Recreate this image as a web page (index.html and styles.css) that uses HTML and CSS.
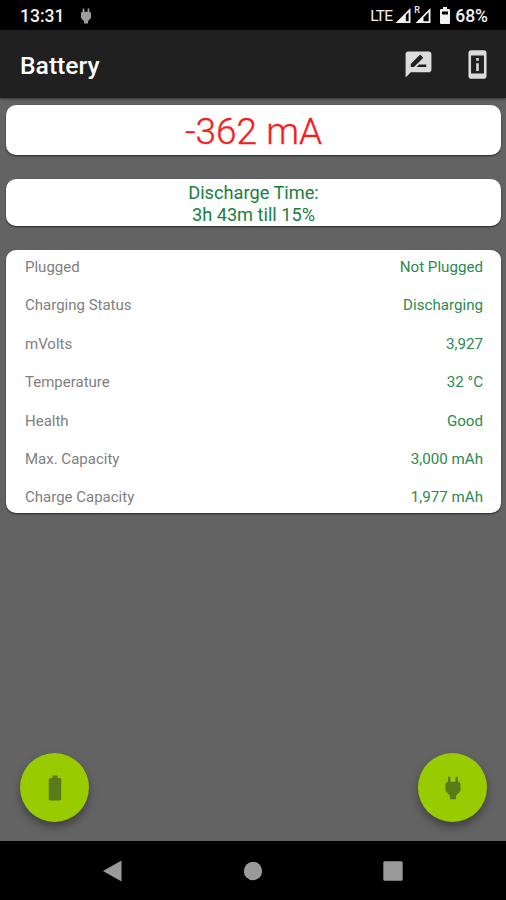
FILE: index.html
```html
<!DOCTYPE html>
<html lang="en">
<head>
  <meta charset="UTF-8">
  <meta name="viewport" content="width=device-width, initial-scale=1.0">
  <title>Battery</title>
  <link rel="stylesheet" href="styles.css">
</head>
<body>
  <div class="status-bar">
    <span class="clock">13:31</span>
    <svg class="status-plug" viewBox="0 0 24 24"><path d="M16.01 7L16 3h-2v4h-4V3H8v4h-.01C7 6.99 6 7.99 6 8.99v5.49L9.5 18v3h5v-3l3.5-3.51v-5.5c0-1-1-2-1.99-1.99z"/></svg>
    <div class="status-right">
      <span class="lte">LTE</span>
      <svg class="signal" viewBox="0 0 16 16"><path d="M0 16L16 0V16z"/><path class="hole" d="M11 7.5L14 4.500V14H11z"/></svg>
      <div class="roaming">
        <span class="roaming-r">R</span>
        <svg class="signal" viewBox="0 0 16 16"><path d="M0 16L16 0V16z"/><path class="hole" d="M8.500 10L14 4.500V14H8.500z"/></svg>
      </div>
      <svg class="status-battery" viewBox="0 0 10 17"><path d="M3 0h4v2h2q1 0 1 1v13q0 1-1 1H1q-1 0-1-1V3q0-1 1-1h2z"/><path class="hole" d="M2 4.500h6v3H2z"/></svg>
      <span class="percent">68%</span>
    </div>
  </div>

  <header class="app-bar">
    <h1>Battery</h1>
    <div class="actions">
      <svg class="icon" viewBox="0 0 24 24"><path d="M20 2H4c-1.1 0-1.99.9-1.99 2L2 22l4-4h14c1.1 0 2-.9 2-2V4c0-1.1-.9-2-2-2zM6 14v-2.470l6.880-6.880c.2-.2.51-.2.71 0l1.770 1.770c.2.2.2.51 0 .71L8.470 14H6zm12 0h-7.500l2-2H18v2z"/></svg>
      <svg class="icon" viewBox="0 0 24 24"><path d="M13 7h-2v2h2V7zm0 4h-2v6h2v-6zm4-9.990L7 1c-1.100 0-2 .9-2 2v18c0 1.100.9 2 2 2h10c1.100 0 2-.9 2-2V3c0-1.100-.9-1.990-2-1.990zM17 19H7V5h10v14z"/></svg>
    </div>
  </header>

  <main class="content">
    <div class="card current">-362 mA</div>
    <div class="card time">Discharge Time:<br>3h 43m till 15%</div>
    <div class="card details">
      <div class="row"><span>Plugged</span><span class="value">Not Plugged</span></div>
      <div class="row"><span>Charging Status</span><span class="value">Discharging</span></div>
      <div class="row"><span>mVolts</span><span class="value">3,927</span></div>
      <div class="row"><span>Temperature</span><span class="value">32 °C</span></div>
      <div class="row"><span>Health</span><span class="value">Good</span></div>
      <div class="row"><span>Max. Capacity</span><span class="value">3,000 mAh</span></div>
      <div class="row"><span>Charge Capacity</span><span class="value">1,977 mAh</span></div>
    </div>
    <div class="fabs">
      <button class="fab"><svg viewBox="0 0 24 24"><path d="M15.67 4H14V2h-4v2H8.330C7.600 4 7 4.600 7 5.330v15.330C7 21.400 7.600 22 8.330 22h7.330c.74 0 1.340-.6 1.340-1.330V5.330C17 4.600 16.400 4 15.670 4z"/></svg></button>
      <button class="fab"><svg viewBox="0 0 24 24"><path d="M16.01 7L16 3h-2v4h-4V3H8v4h-.01C7 6.99 6 7.99 6 8.99v5.49L9.5 18v3h5v-3l3.5-3.51v-5.5c0-1-1-2-1.99-1.99z"/></svg></button>
    </div>
  </main>

  <nav class="nav-bar">
    <svg viewBox="0 0 22 22"><path d="M1 11L19.500 .5v21z"/></svg>
    <svg viewBox="0 0 22 22"><circle cx="11" cy="11" r="9.200"/></svg>
    <svg viewBox="0 0 22 22"><rect x="1.300" y="1.300" width="19.400" height="19.400" rx="1.500"/></svg>
  </nav>
</body>
</html>
```
FILE: styles.css
```css
* {box-sizing: border-box;}
body {margin: 0; height: 900px; display: flex; flex-direction: column; font-family: Roboto, sans-serif; background: #636363; overflow: hidden;}
svg {display: block; flex: none;}

/* Status bar */
.status-bar {height: 30px; background: #000; color: #f2f2f2; display: flex; align-items: center; padding: 1px 18px 0 20px; font-size: 17.500px; font-weight: 500; flex: none;}
.status-bar svg {fill: #f2f2f2;}
.status-bar .hole {fill: #000;}
.status-bar .status-plug {width: 20px; height: 20px; margin-left: 12px; fill: #9c9c9c;}
.status-right {display: flex; align-items: center; margin-left: auto;}
.lte {font-size: 15.500px; font-weight: 400; letter-spacing: -0.8px; margin-right: 3px;}
.signal {width: 16px; height: 15px;}
.roaming {position: relative; margin-left: 4px;}
.roaming-r {position: absolute; left: -1px; top: -2px; font-size: 9px; line-height: 9px;}
.status-battery {width: 10px; height: 17px; margin: 0 5px 0 9px;}

/* App bar */
.app-bar {height: 68px; background: #202020; display: flex; align-items: center; justify-content: space-between; padding: 0 13px 0 20px; flex: none; box-shadow: 0 1px 2px rgba(0,0,0,0.5); z-index: 1;}
.app-bar h1 {margin: 3px 0 0; color: #fff; font-size: 24.700px; font-weight: 500;}
.actions {display: flex; gap: 28px;}
.icon {width: 31px; height: 31px; fill: #dcdcdc;}

/* Cards */
.content {flex: 1; display: flex; flex-direction: column; gap: 24px; padding: 7px 5px 0 6px;}
.card {background: #fff; border-radius: 10px; box-shadow: 0 1px 2px rgba(0,0,0,0.6);}
.current {height: 50px; line-height: 54px; text-align: center; font-size: 37px; font-weight: 300; color: #f81b1b; -webkit-text-stroke: 0.3px #f81b1b;}
.time {height: 47px; padding-top: 3px; text-align: center; font-size: 18.200px; line-height: 21.500px; color: #178040;}
.details {height: 263px; padding: 1px 18px 0 19px; display: flex; flex-direction: column; gap: 6.400px;}
.row {display: flex; justify-content: space-between; line-height: 32px; font-size: 15px; color: #808080;}
.value {color: #2b8a50; font-size: 15.150px;}

/* Round buttons */
.fabs {display: flex; justify-content: space-between; margin: auto 14px 19px;}
.fab {width: 69px; height: 69px; padding: 0; border: none; border-radius: 50%; background: #99cc00; display: flex; align-items: center; justify-content: center; box-shadow: 0 5px 9px rgba(0,0,0,0.35);}
.fab svg {width: 30px; height: 30px; fill: #5c7a1a;}

/* Navigation */
.nav-bar {height: 59px; background: #000; display: flex; justify-content: center; align-items: center; gap: 118px; flex: none;}
.nav-bar svg {width: 22px; height: 22px; fill: #9a9a9a;}
```
